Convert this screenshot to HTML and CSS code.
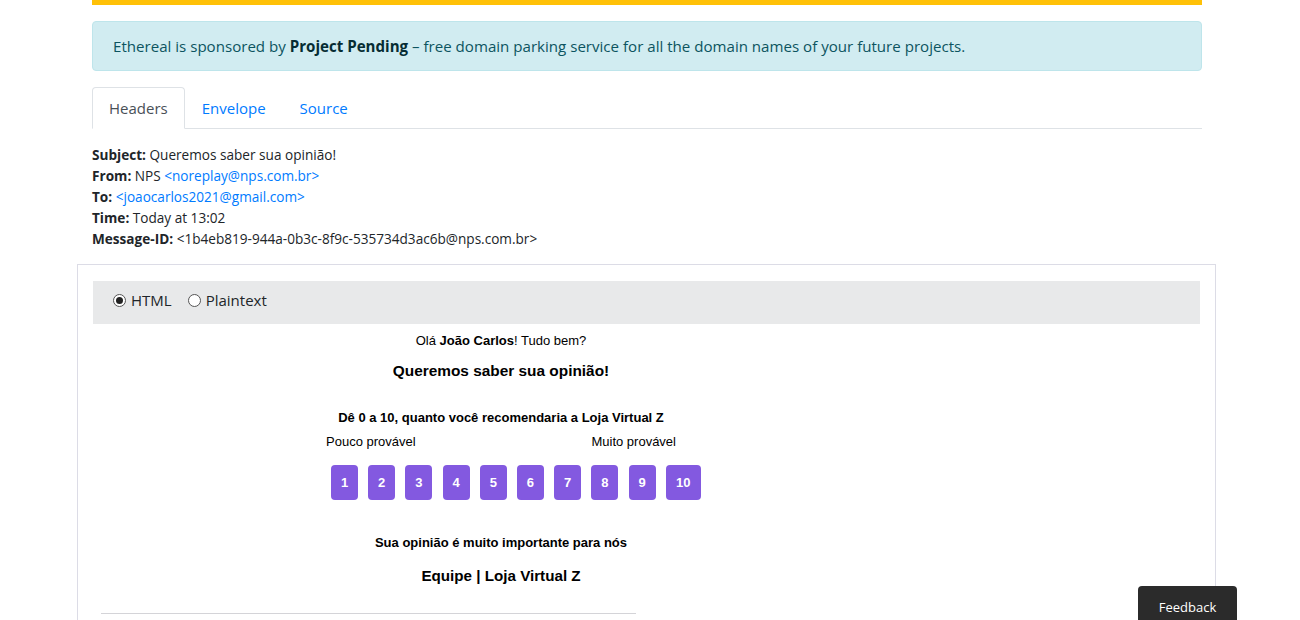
FILE: index.html
```html
<!DOCTYPE html>
<html>
<head>
<meta charset="utf-8">
<title>Ethereal message</title>
<link rel="stylesheet" href="styles.css">
</head>
<body>
<div class="container">
  <div class="topbar"></div>
  <div class="alert"><span>Ethereal is sponsored by <b>Project Pending</b> – free domain parking service for all the domain names of your future projects.</span></div>
  <ul class="tabs">
    <li class="tab active">Headers</li>
    <li class="tab">Envelope</li>
    <li class="tab">Source</li>
  </ul>
  <div class="headers">
    <div><b>Subject:</b> Queremos saber sua opinião!</div>
    <div><b>From:</b> NPS <a>&lt;noreplay@nps.com.br&gt;</a></div>
    <div><b>To:</b> <a>&lt;joaocarlos2021@gmail.com&gt;</a></div>
    <div><b>Time:</b> Today at 13:02</div>
    <div><b>Message-ID:</b> &lt;1b4eb819-944a-0b3c-8f9c-535734d3ac6b@nps.com.br&gt;</div>
  </div>
  <div class="frame">
    <div class="modebar">
      <label class="radio"><span class="dot checked"></span>HTML</label>
      <label class="radio"><span class="dot"></span>Plaintext</label>
    </div>
    <div class="mail">
      <p class="hello">Olá <b>João Carlos</b>! Tudo bem?</p>
      <h2 class="title">Queremos saber sua opinião!</h2>
      <p class="question">Dê 0 a 10, quanto você recomendaria a Loja Virtual Z</p>
      <div class="scale">
        <div class="labels"><span>Pouco provável</span><span>Muito provável</span></div>
        <div class="buttons">
          <span class="btn">1</span><span class="btn">2</span><span class="btn">3</span><span class="btn">4</span><span class="btn">5</span><span class="btn">6</span><span class="btn">7</span><span class="btn">8</span><span class="btn">9</span><span class="btn">10</span>
        </div>
      </div>
      <p class="important">Sua opinião é muito importante para nós</p>
      <p class="team">Equipe | Loja Virtual Z</p>
      <div class="rule"></div>
    </div>
  </div>
</div>
<div class="feedback">Feedback</div>
</body>
</html>
```
FILE: styles.css
```css
html, body { margin: 0; padding: 0; background: #fff; }
body {
  font-family: "Open Sans", "Noto Sans", sans-serif;
  color: #212529;
  font-size: 16px;
  overflow: hidden;
}
.container { width: 1110px; margin-left: 92px; }
.topbar { height: 5px; background: #ffc107; }
.alert {
  margin-top: 16px;
  height: 50px;
  box-sizing: border-box;
  padding: 0 20px;
  display: flex;
  align-items: center;
  background: #d1ecf1;
  border: 1px solid #bee5eb;
  border-radius: 4px;
  color: #0c5460;
  font-size: 15.1px;
}
.alert b { color: #062c33; }
.tabs {
  list-style: none;
  margin: 16px 0 0 0;
  padding: 0;
  display: flex;
  border-bottom: 1px solid #dee2e6;
  height: 41px;
}
.tab {
  padding: 0 16px;
  display: flex;
  align-items: center;
  color: #007bff;
  font-size: 15px;
  border: 1px solid transparent;
  border-top-left-radius: 4px;
  border-top-right-radius: 4px;
  margin-bottom: -1px;
}
.tab.active { color: #495057; background: #fff; border-color: #dee2e6 #dee2e6 #fff; }
.headers { margin-top: 15px; font-size: 13.6px; line-height: 21px; }
.headers a { color: #007bff; }
.frame {
  margin: 15px -14px 0 -15px;
  border: 1px solid #dcdce6;
  border-bottom: none;
  padding: 16px 15px 0 15px;
  height: 400px;
}
.modebar {
  background: #e8e9ea;
  height: 43px;
  box-sizing: border-box;
  padding: 0 0 5px 20px;
  display: flex;
  align-items: center;
  gap: 16px;
  font-size: 15px;
}
.radio { display: flex; align-items: center; gap: 5px; color: #212529; }
.dot {
  width: 13px; height: 13px;
  border: 1px solid #555;
  border-radius: 50%;
  box-sizing: border-box;
  display: inline-flex;
  align-items: center;
  justify-content: center;
  background: #fff;
}
.dot.checked::after { content: ""; width: 7px; height: 7px; border-radius: 50%; background: #222; }
.mail {
  width: 800px;
  margin-left: 8px;
  font-family: "Liberation Sans", Arial, sans-serif;
  color: #000;
  text-align: center;
}
.hello { margin: 8px 0 0; font-size: 13px; line-height: 17px; }
.title { margin: 12px 0 0; font-size: 15.4px; line-height: 20px; }
.question { margin: 28px 0 0; font-size: 13px; font-weight: bold; line-height: 17px; }
.scale { width: 350px; margin: 8px 0 0 225px; }
.labels { display: flex; justify-content: space-between; font-size: 13px; line-height: 16px; }
.buttons { display: flex; gap: 10.2px; margin-top: 15px; padding-left: 5px; }
.btn {
  flex-shrink: 0;
  display: flex; align-items: center; justify-content: center;
  width: 27px; height: 35px;
  box-sizing: border-box;
  background: #8359e0;
  color: #fff;
  font-weight: bold;
  font-size: 13px;
  border-radius: 4px;
}
.btn:last-child { width: 35px; }
.important { margin: 35px 0 0; font-size: 13px; font-weight: bold; line-height: 16px; }
.team { margin: 15px 0 0; font-size: 15.2px; font-weight: bold; line-height: 19px; }
.rule { margin-top: 28px; width: 535px; border-top: 1px solid #d4d4d8; }
.feedback {
  position: fixed;
  left: 1138px;
  top: 586px;
  width: 99px;
  height: 40px;
  background: #2b2b2b;
  color: #fff;
  border-radius: 4px 4px 0 0;
  font-size: 13px;
  text-align: center;
  padding-top: 12px;
  box-sizing: border-box;
}
```
